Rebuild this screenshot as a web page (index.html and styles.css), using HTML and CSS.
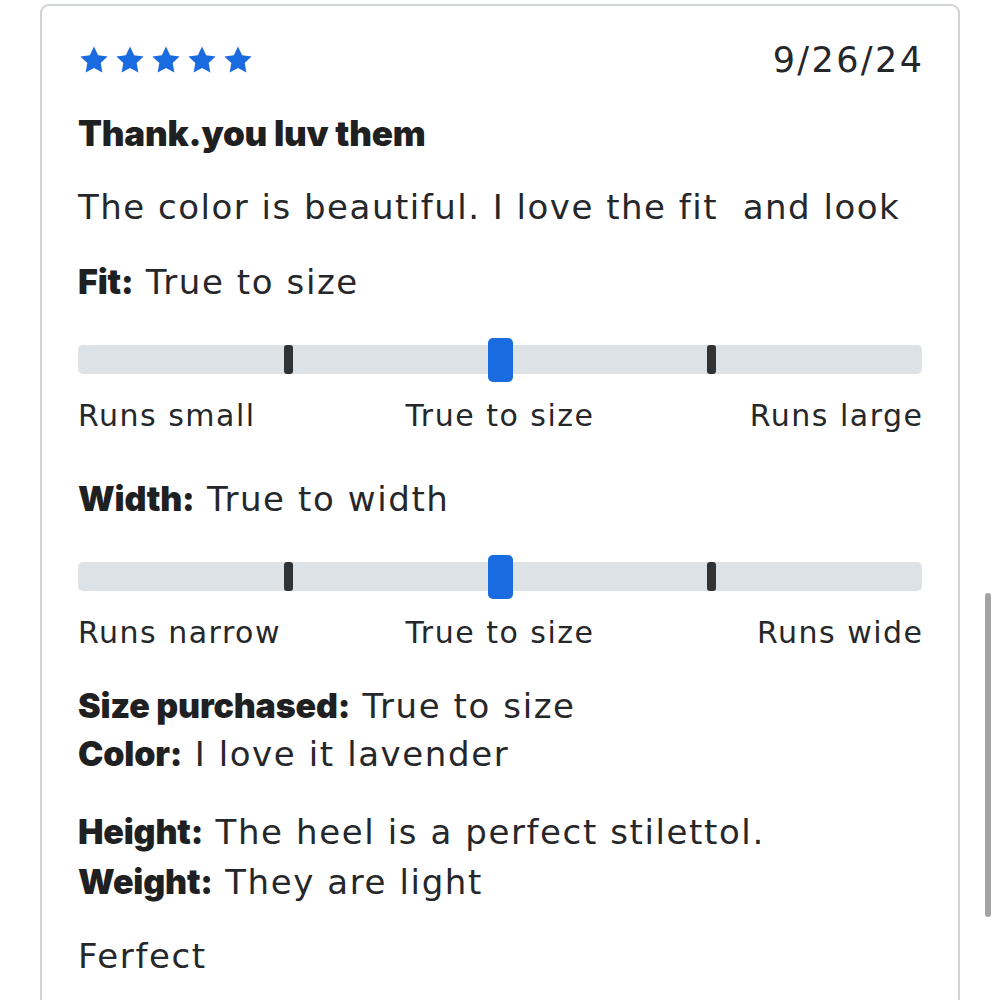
FILE: index.html
```html
<!DOCTYPE html>
<html lang="en">
<head>
<meta charset="utf-8">
<link rel="stylesheet" href="styles.css">
</head>
<body>
<div class="card">
  <div class="head">
    <div class="stars">
      <svg class="star" viewBox="0 0 24 24"><path d="M12 1.8l3.1 6.6 7.1.9-5.2 5 1.3 7.1L12 18l-6.3 3.4 1.3-7.1-5.2-5 7.1-.9z"/></svg>
      <svg class="star" viewBox="0 0 24 24"><path d="M12 1.8l3.1 6.6 7.1.9-5.2 5 1.3 7.1L12 18l-6.3 3.4 1.3-7.1-5.2-5 7.1-.9z"/></svg>
      <svg class="star" viewBox="0 0 24 24"><path d="M12 1.8l3.1 6.6 7.1.9-5.2 5 1.3 7.1L12 18l-6.3 3.4 1.3-7.1-5.2-5 7.1-.9z"/></svg>
      <svg class="star" viewBox="0 0 24 24"><path d="M12 1.8l3.1 6.6 7.1.9-5.2 5 1.3 7.1L12 18l-6.3 3.4 1.3-7.1-5.2-5 7.1-.9z"/></svg>
      <svg class="star" viewBox="0 0 24 24"><path d="M12 1.8l3.1 6.6 7.1.9-5.2 5 1.3 7.1L12 18l-6.3 3.4 1.3-7.1-5.2-5 7.1-.9z"/></svg>
    </div>
    <div class="date">9/26/24</div>
  </div>
  <h2 class="title">Thank.you luv them</h2>
  <p class="body">The color is beautiful. I love the fit&nbsp; and look</p>

  <p class="attr fit-line"><b>Fit:</b> True to size</p>
  <div class="scale">
    <div class="track">
      <span class="tick"></span>
      <span class="thumb"></span>
      <span class="tick"></span>
    </div>
    <div class="labels"><span class="l">Runs small</span><span class="c">True to size</span><span class="r">Runs large</span></div>
  </div>

  <p class="attr width-line"><b>Width:</b> True to width</p>
  <div class="scale">
    <div class="track">
      <span class="tick"></span>
      <span class="thumb"></span>
      <span class="tick"></span>
    </div>
    <div class="labels"><span class="l">Runs narrow</span><span class="c">True to size</span><span class="r">Runs wide</span></div>
  </div>

  <div class="group g1">
    <p class="attr"><b>Size purchased:</b> True to size</p>
    <p class="attr"><b>Color:</b> I love it lavender</p>
  </div>
  <div class="group g2">
    <p class="attr"><b>Height:</b> The heel is a perfect stilettol.</p>
    <p class="attr"><b>Weight:</b> They are light</p>
  </div>
  <p class="attr last">Ferfect</p>
</div>
<div class="scrollbar"></div>
</body>
</html>
```
FILE: styles.css
```css
html, body {
  margin: 0;
  padding: 0;
  background: #ffffff;
}
body {
  width: 1000px;
  height: 1000px;
  overflow: hidden;
  position: relative;
  font-family: "DejaVu Sans", "Liberation Sans", Arial, sans-serif;
  font-weight: 400;
  color: #26272a;
}
.card {
  margin: 4px 0 0 40px;
  width: 920px;
  height: 1100px;
  box-sizing: border-box;
  border: 2px solid #cfd3d6;
  border-radius: 9px;
  padding: 34px 36px 0 36px;
}
.head {
  display: flex;
  justify-content: space-between;
  align-items: center;
  height: 40px;
}
.stars {
  display: flex;
  gap: 4px;
}
.star {
  width: 32px;
  height: 32px;
  fill: #1a6ae0;
}
.date {
  font-size: 35px;
  letter-spacing: 2.4px;
  margin-right: -2.4px;
}
.title {
  margin: 33px 0 0 0;
  font-family: Inter, "Liberation Sans", sans-serif;
  font-weight: 900;
  font-size: 35px;
  letter-spacing: -0.2px;
  line-height: 40px;
  color: #1f2022;
}
p { margin: 0; }
.body {
  margin-top: 34px;
  font-size: 34px;
  line-height: 40px;
  letter-spacing: 1.5px;
}
.attr {
  font-size: 34px;
  line-height: 48px;
  letter-spacing: 1.6px;
}
.attr b {
  font-family: Inter, "Liberation Sans", sans-serif;
  font-weight: 900;
  font-size: 34px;
  line-height: 1;
  letter-spacing: -0.2px;
  color: #1f2022;
}
.fit-line { margin-top: 31px; }
.width-line { margin-top: 39px; }
.scale { margin-top: 39px; }
.track {
  position: relative;
  height: 29px;
  background: #dde2e6;
  border-radius: 5px;
}
.tick {
  position: absolute;
  top: 0;
  width: 9px;
  height: 29px;
  background: #313234;
  border-radius: 3px;
}
.tick:first-child { left: 206px; }
.tick:last-child { left: 629px; }
.thumb {
  position: absolute;
  top: -7px;
  left: 410px;
  width: 25px;
  height: 44px;
  background: #1a6ae0;
  border-radius: 5px;
}
.labels {
  display: grid;
  grid-template-columns: 1fr auto 1fr;
  margin-top: 22px;
  font-size: 30px;
  line-height: 40px;
  letter-spacing: 1.5px;
}
.labels .l { justify-self: start; }
.labels .c { justify-self: center; }
.labels .r { justify-self: end; margin-right: -1.5px; }
.g1 { margin-top: 29px; }
.g2 { margin-top: 29px; }
.g2 .attr { line-height: 50px; }
.last { margin-top: 25px; }
.scrollbar {
  position: absolute;
  left: 985px;
  top: 593px;
  width: 6px;
  height: 324px;
  background: #a3a3a3;
  border-radius: 3px;
}
```
